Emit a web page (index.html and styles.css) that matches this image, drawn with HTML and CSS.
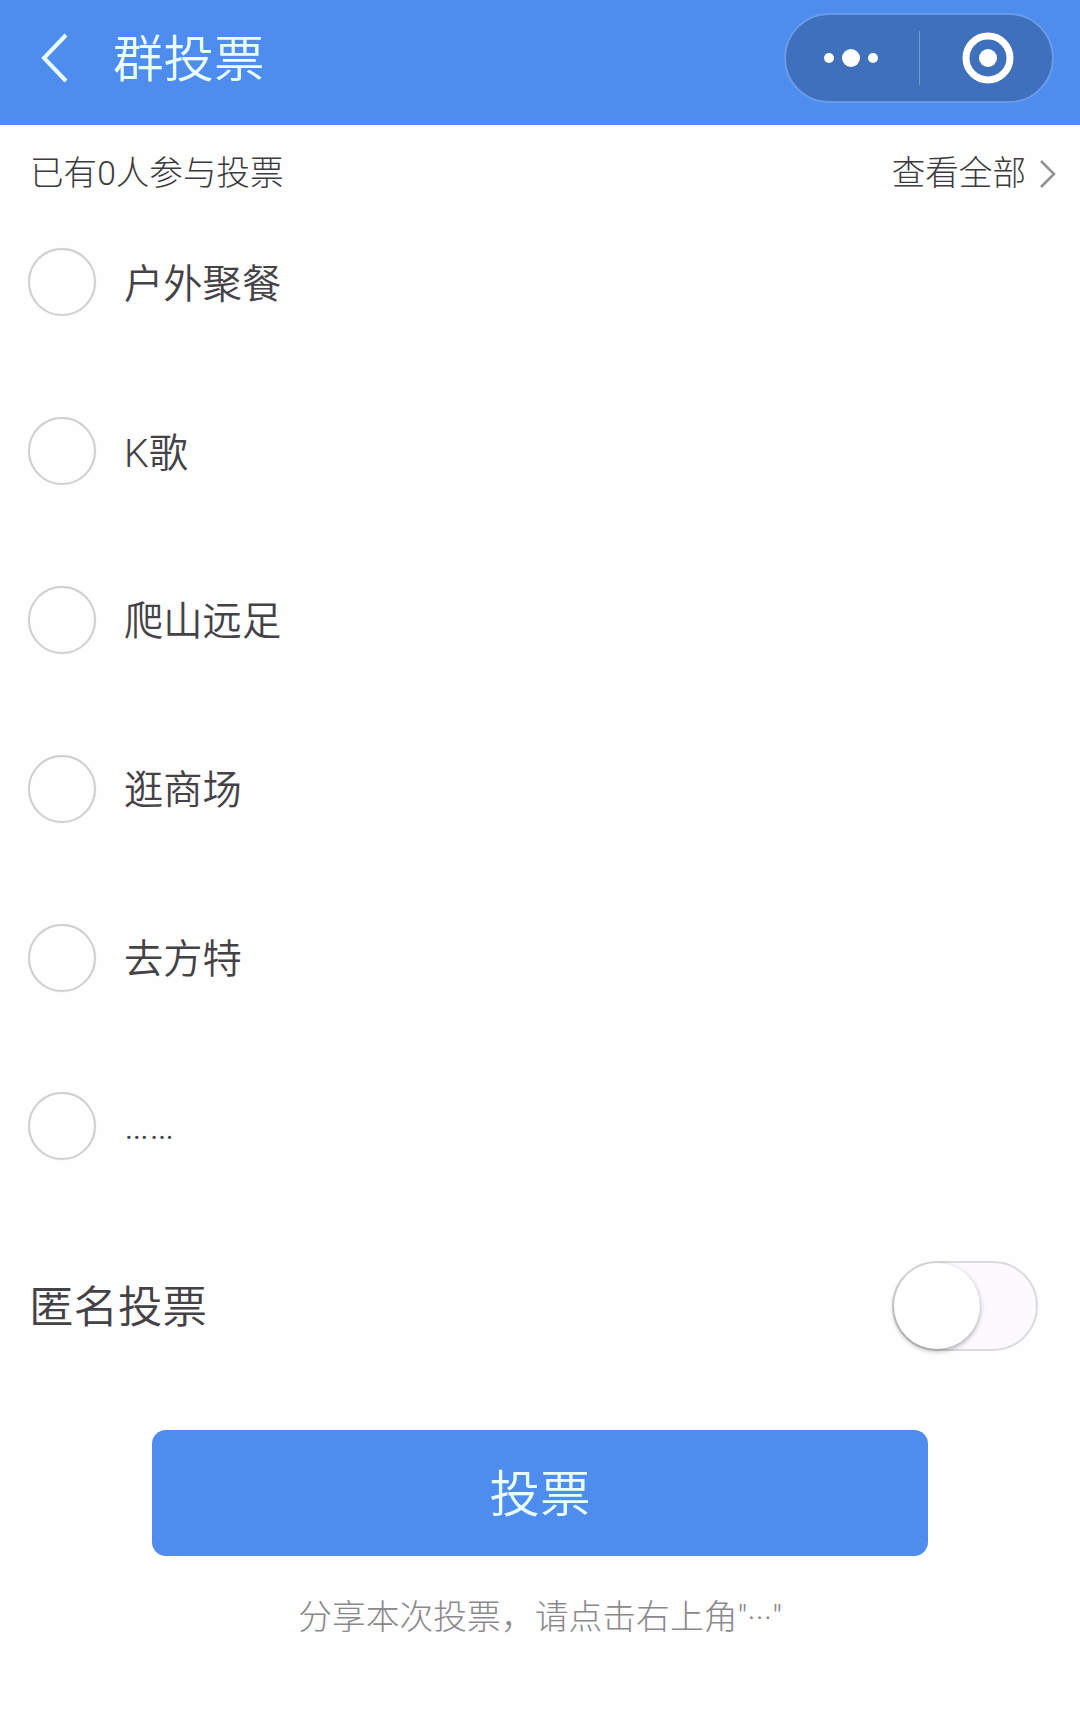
FILE: index.html
```html
<!DOCTYPE html>
<html lang="zh-CN">
<head>
    <meta charset="UTF-8">
    <meta name="viewport" content="width=device-width, initial-scale=1.0">
    <title>群投票</title>
    <link rel="stylesheet" href="styles.css">
</head>
<body>
    <header class="navbar">
        <svg class="back" width="28" height="50" viewBox="0 0 28 50">
            <path d="M25 2 L3 25 L25 48" fill="none" stroke="#eaffff" stroke-width="4"/>
        </svg>
        <h1>群投票</h1>
        <div class="capsule">
            <svg class="more" width="56" height="20" viewBox="0 0 56 20">
                <circle cx="6" cy="10" r="5"/>
                <circle cx="28" cy="10" r="9"/>
                <circle cx="50" cy="10" r="5"/>
            </svg>
            <span class="divider"></span>
            <svg class="close" width="52" height="52" viewBox="0 0 52 52">
                <circle cx="26" cy="26" r="22" fill="none" stroke="#fff" stroke-width="7"/>
                <circle cx="26" cy="26" r="9" fill="#fff"/>
            </svg>
        </div>
    </header>
    <main>
        <div class="summary">
            <span>已有0人参与投票</span>
            <a class="view-all">查看全部
                <svg width="18" height="30" viewBox="0 0 18 30">
                    <path d="M2 2 L15 15 L2 28" fill="none" stroke="#919195" stroke-width="2.5"/>
                </svg>
            </a>
        </div>
        <ul class="options">
            <li><span class="radio"></span><span class="label">户外聚餐</span></li>
            <li><span class="radio"></span><span class="label">K歌</span></li>
            <li><span class="radio"></span><span class="label">爬山远足</span></li>
            <li><span class="radio"></span><span class="label">逛商场</span></li>
            <li><span class="radio"></span><span class="label">去方特</span></li>
            <li><span class="radio"></span><span class="label dots">……</span></li>
        </ul>
        <div class="anonymous">
            <span class="label">匿名投票</span>
            <span class="switch"><span class="knob"></span></span>
        </div>
        <button class="submit">投票</button>
        <p class="tip">分享本次投票，请点击右上角"···"</p>
    </main>
</body>
</html>
```
FILE: styles.css
```css
* {
    box-sizing: border-box;
}

body {
    margin: 0;
    background: #fefefe;
    color: #3c3a3e;
    font-family: Roboto, "Noto Sans CJK SC", sans-serif;
    font-weight: 300;
}

.navbar {
    display: flex;
    align-items: center;
    height: 125px;
    padding: 0 26px 10px 41px;
    background: #4e8cee;
    color: #eaffff;
}

.navbar h1 {
    margin: 0 auto 0 44px;
    padding-top: 4px;
    font-size: 50.5px;
    font-weight: 350;
    line-height: 70px;
}

.capsule {
    display: flex;
    align-items: center;
    width: 270px;
    height: 90px;
    border: 2px solid #699bea;
    border-radius: 45px;
    background: #3e70bc;
}

.more {
    margin-left: 37px;
    fill: #fff;
}

.divider {
    width: 1px;
    height: 54px;
    margin-left: 40px;
    background: #7398d0;
}

.close {
    margin-left: 42px;
}

.summary {
    display: flex;
    justify-content: space-between;
    align-items: center;
    height: 95px;
    padding: 2px 23px 0 30px;
    font-size: 33.6px;
    line-height: 48px;
}

.view-all {
    display: flex;
    align-items: center;
    gap: 13px;
}

.options {
    margin: 0;
    padding: 0 28px;
    list-style: none;
}

.options li {
    display: flex;
    align-items: center;
    height: 168.8px;
    padding-bottom: 44px;
    font-size: 39.3px;
    font-weight: 350;
    line-height: 56px;
}

.label {
    padding-top: 5px;
    color: #444246;
}

.dots {
    padding-top: 0;
}

.radio {
    width: 68px;
    height: 68px;
    margin-right: 28px;
    border: 2.5px solid #d0ced2;
    border-radius: 50%;
    box-shadow: 0 0 1px #d8d6da;
}

.anonymous {
    display: flex;
    justify-content: space-between;
    align-items: center;
    height: 90px;
    margin: 28px 42px 0 29px;
    font-size: 44.5px;
    font-weight: 350;
    line-height: 64px;
}

.switch {
    width: 146px;
    height: 90px;
    border: 2px solid #dcdadf;
    border-radius: 45px;
    background: #fcfafe;
}

.knob {
    display: block;
    width: 86px;
    height: 86px;
    border-radius: 50%;
    background: #fff;
    box-shadow: 0 2px 5px rgba(0, 0, 0, 0.35);
}

.submit {
    display: block;
    width: 776px;
    height: 126px;
    margin: 79px auto 0;
    padding: 0 0 6px;
    border: none;
    border-radius: 14px;
    background: #4e8cee;
    color: #eaffff;
    font: inherit;
    font-size: 50.5px;
    font-weight: 350;
}

.tip {
    margin: 38px 0 0;
    color: #8a888c;
    font-size: 33.8px;
    line-height: 48px;
    text-align: center;
}
```
